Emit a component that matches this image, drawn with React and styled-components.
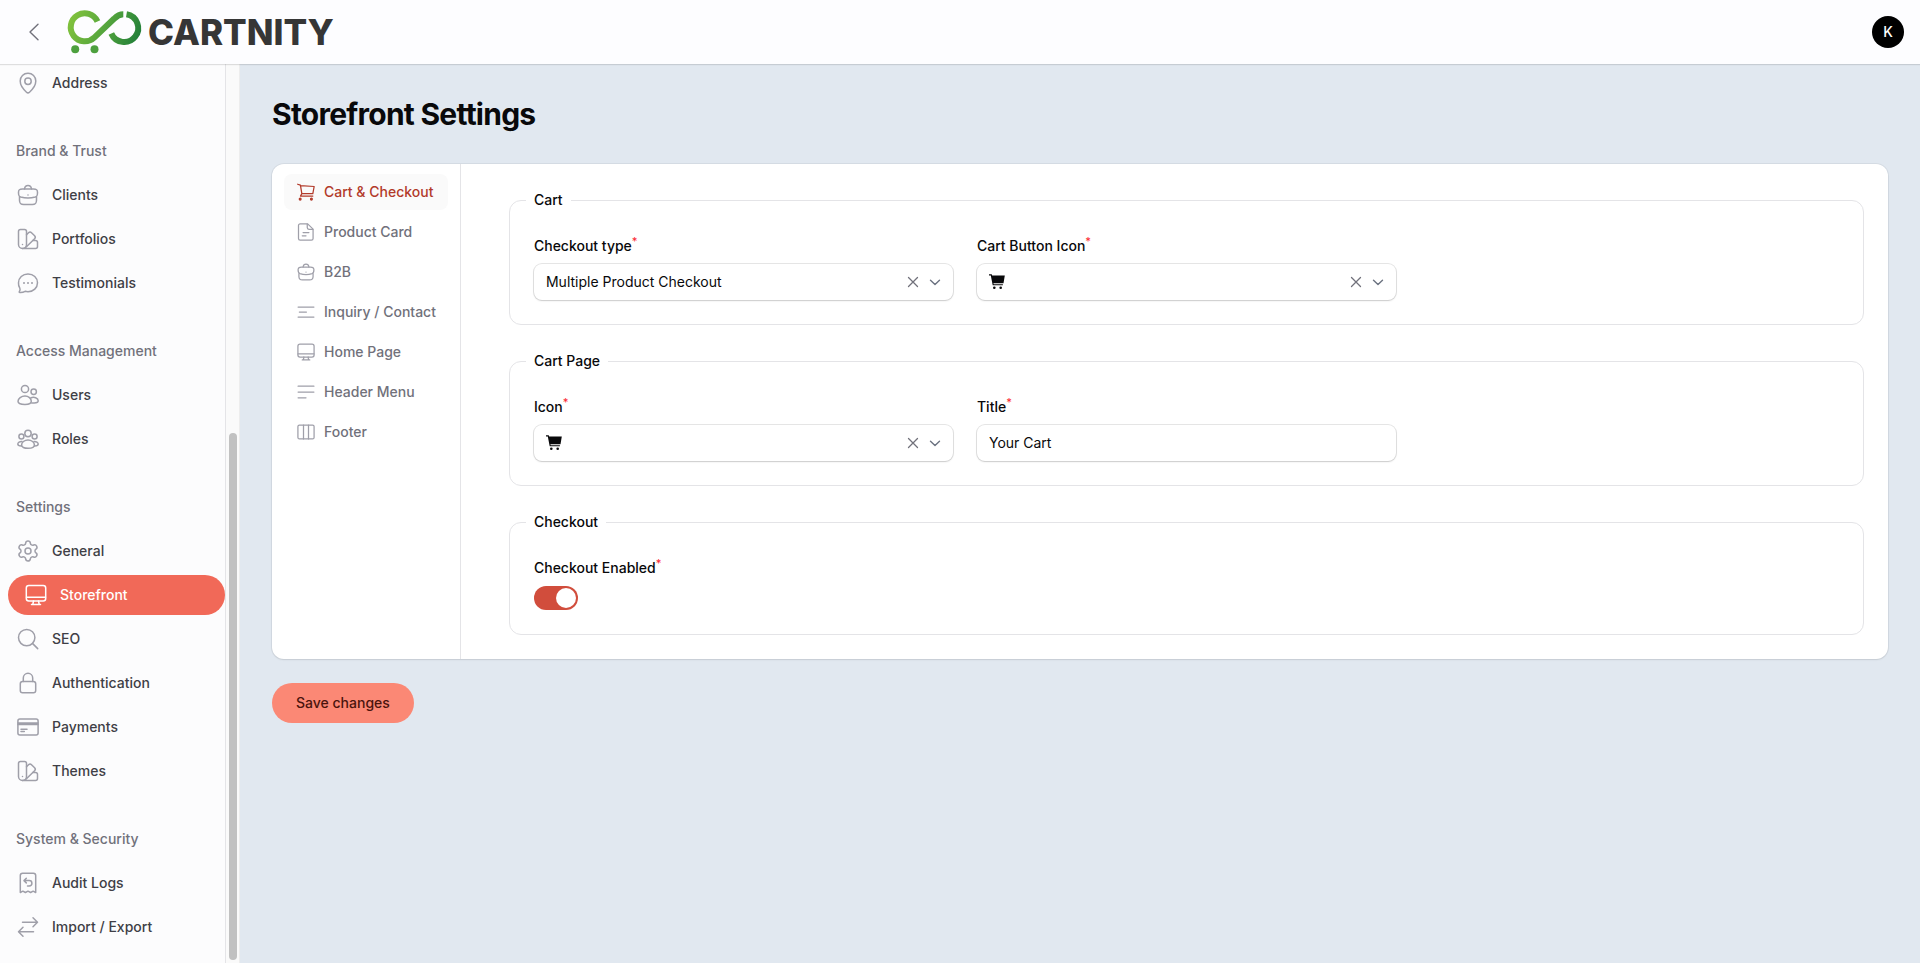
import React, { useState } from 'react';
import styled, { createGlobalStyle, css } from 'styled-components';
import { Settings } from 'lucide-react';

const GlobalStyle = createGlobalStyle`
    *, *::before, *::after {
        box-sizing: border-box;
    }
    body {
        margin: 0;
        background: #e1e8f0;
        color: #09090b;
        font-family: Inter, "Noto Sans", sans-serif;
        font-size: 14px;
        line-height: 20px;
        -webkit-font-smoothing: antialiased;
    }
    button, input, select {
        font: inherit;
        color: inherit;
    }
`;

const Page = styled.div`
    display: flex;
    flex-direction: column;
    height: 100vh;
`;

const Topbar = styled.header`
    display: flex;
    align-items: center;
    flex: none;
    height: 64px;
    padding: 0 16px 0 24px;
    background: #fdfdff;
    box-shadow: 0 1px 1px rgba(9, 9, 11, 0.12);
    z-index: 1;
`;

const IconButton = styled.button`
    display: flex;
    padding: 0;
    border: none;
    background: none;
    color: #71717b;
    cursor: pointer;
`;

const Logo = styled.a`
    display: flex;
    align-items: center;
    gap: 4px;
    margin-left: 22px;
    margin-right: auto;
    color: #363636;
    text-decoration: none;
    font-size: 35px;
    font-weight: 800;
    line-height: 40px;
`;

const Avatar = styled.button`
    width: 32px;
    height: 32px;
    padding: 0;
    border: none;
    border-radius: 50%;
    background: #000;
    color: #fff;
    font-weight: 500;
`;

const Body = styled.div`
    display: flex;
    flex: 1;
    min-height: 0;
`;

const Sidebar = styled.aside`
    display: flex;
    flex: none;
    width: 240px;
    background: #fcfcfd;
`;

const Nav = styled.nav`
    display: flex;
    flex-direction: column;
    justify-content: flex-end;
    gap: 28px;
    flex: 1;
    padding-bottom: 16px;
    border-right: 1px solid #e4e4e7;
    overflow: hidden;
`;

const ScrollTrack = styled.div`
    display: flex;
    flex-direction: column;
    justify-content: flex-end;
    width: 14px;
    padding: 3px 2px 3px 3px;
    background: #fafafa;
    border-right: 1px solid #ededed;
`;

const ScrollThumb = styled.div`
    height: 59%;
    border-radius: 4px;
    background: #c1c1c1;
`;

const NavGroup = styled.div`
    display: flex;
    flex-direction: column;
    flex: none;
    gap: 4px;
`;

const GroupLabel = styled.div`
    padding: 10px 16px;
    color: #71717b;
    font-weight: 500;
`;

const NavLink = styled.a`
    display: flex;
    align-items: center;
    gap: 12px;
    height: 40px;
    padding: 0 16px;
    color: #3f3f46;
    font-weight: 500;
    text-decoration: none;
    svg {
        color: #9f9fa9;
    }
    ${({ $active }) => $active && css`
        margin-left: 8px;
        border-radius: 20px;
        background: #f16958;
        color: #fff;
        svg {
            color: #fff;
        }
    `}
`;

const Main = styled.main`
    display: flex;
    flex-direction: column;
    align-items: flex-start;
    flex: 1;
    min-width: 0;
    padding: 32px;
    overflow: auto;
`;

const Title = styled.h1`
    margin: 0 0 32px;
    font-size: 30px;
    line-height: 36px;
    font-weight: 700;
    letter-spacing: -0.025em;
`;

const Card = styled.section`
    display: flex;
    width: 100%;
    border-radius: 12px;
    background: #fff;
    box-shadow: 0 0 0 1px rgba(9, 9, 11, 0.05), 0 1px 2px rgba(9, 9, 11, 0.08);
`;

const Tabs = styled.nav`
    display: flex;
    flex-direction: column;
    gap: 4px;
    padding: 10px 12px;
    border-right: 1px solid #e4e4e7;
`;

const Tab = styled.a`
    display: flex;
    align-items: center;
    gap: 8px;
    height: 36px;
    padding: 0 12px;
    border-radius: 8px;
    color: ${({ $active }) => ($active ? '#b23a2a' : '#71717b')};
    background: ${({ $active }) => ($active ? '#fafafa' : 'transparent')};
    font-weight: 500;
    text-decoration: none;
    svg {
        color: ${({ $active }) => ($active ? '#b23a2a' : '#9f9fa9')};
    }
`;

const Form = styled.form`
    display: flex;
    flex-direction: column;
    gap: 24px;
    flex: 1;
    min-width: 0;
    padding: 24px 24px 24px 48px;
`;

const Fieldset = styled.fieldset`
    display: grid;
    grid-template-columns: repeat(3, minmax(0, 1fr));
    gap: 24px;
    margin: 0;
    padding: 24px;
    border: 1px solid #e4e4e7;
    border-radius: 12px;
`;

const Legend = styled.legend`
    margin-left: -8px;
    padding: 0 8px;
    line-height: 24px;
    font-weight: 500;
`;

const FieldBlock = styled.div`
    display: flex;
    flex-direction: column;
    align-items: flex-start;
    gap: 8px;
`;

const Label = styled.label`
    font-weight: 500;
`;

const Required = styled.sup`
    color: #fb2c36;
    font-size: 11px;
    line-height: 0;
`;

const Control = styled.div`
    display: flex;
    align-items: center;
    gap: 8px;
    width: 100%;
    height: 36px;
    padding: 0 11px 0 12px;
    border-radius: 8px;
    background: #fff;
    box-shadow: 0 0 0 1px rgba(9, 9, 11, 0.1), 0 1px 2px rgba(9, 9, 11, 0.12);
    color: #09090b;
`;

const Select = styled.select`
    appearance: none;
    flex: 1;
    min-width: 0;
    padding: 0;
    border: none;
    outline: none;
    background: none;
    line-height: 20px;
`;

const TextInput = styled.input`
    flex: 1;
    min-width: 0;
    padding: 0;
    border: none;
    outline: none;
    background: none;
    line-height: 20px;
`;

const Toggle = styled.input`
    appearance: none;
    display: flex;
    width: 44px;
    height: 24px;
    margin: 0;
    padding: 2px;
    border-radius: 12px;
    background: #e4e4e7;
    cursor: pointer;
    &::before {
        content: '';
        width: 20px;
        height: 20px;
        border-radius: 50%;
        background: #fff;
    }
    &:checked {
        justify-content: flex-end;
        background: #d14d3c;
    }
`;

const SaveButton = styled.button`
    height: 40px;
    margin-top: 24px;
    padding: 0 24px;
    border: none;
    border-radius: 20px;
    background: #fb8875;
    color: #4a140d;
    font-weight: 500;
    cursor: pointer;
`;

const icons = {
    pin: (
        <>
            <path d="M12 2.3a7.7 7.7 0 0 1 7.8 7.8c0 5.2-3.5 8.6-6.3 11.1a2.2 2.2 0 0 1-3 0C7.7 18.7 4.2 15.3 4.2 10.1A7.7 7.7 0 0 1 12 2.3z" />
            <circle cx="12" cy="10.3" r="3.2" />
        </>
    ),
    briefcase: (
        <>
            <path d="M8.5 6c.3-2.3.9-3.5 3.5-3.5s3.2 1.200 3.500 3.500" />
            <path d="M6.500 6h11c3.200 0 4 .9 4 3.400 0 3.700-.7 4.100-2.200 4.600-4.700 1.400-9.900 1.400-14.600 0-1.500-.5-2.200-.9-2.200-4.600C2.500 6.900 3.300 6 6.500 6z" />
            <path d="M3.500 14v3.300c0 3.200.9 4.200 4.200 4.200h8.600c3.300 0 4.200-1 4.200-4.200V14M12 12h.01" />
        </>
    ),
    swatch: (
        <>
            <path d="M4.500 2.500h4c1.400 0 2 .6 2 2v13a4 4 0 0 1-8 0v-13c0-1.400.6-2 2-2zM6.500 17.500h.01" />
            <path d="M10.500 7.700l2-1.900c1.100-1 2-1 3 0l3.100 3c1 1.100 1 2 0 3L9.400 20.700" />
            <path d="M16.800 13.500h2.700c1.400 0 2 .6 2 2v4c0 1.400-.6 2-2 2h-13" />
        </>
    ),
    chat: (
        <>
            <path d="M12 3c5.400 0 9.500 3.900 9.500 8.800 0 5-4.100 8.900-9.500 8.900-1 0-2-.1-2.900-.4-1.500.9-3.400 1.300-5.300 1.200-.6 0-.8-.5-.5-.9.900-1.200 1-2.400.5-3.500A8.500 8.500 0 0 1 2.500 11.800C2.500 6.900 6.600 3 12 3z" />
            <path d="M8 12h.01M12 12h.01M16 12h.01" strokeWidth="2" />
        </>
    ),
    users: (
        <>
            <circle cx="9" cy="6" r="3.600" />
            <circle cx="17.700" cy="8.700" r="2.700" />
            <path d="M9 13c3.600 0 6.300 2.500 6.300 5.300 0 2.500-2.500 3.200-6.300 3.200s-7-.7-7-3.200C2 15.500 5.400 13 9 13z" />
            <path d="M14.500 15.200c3.500-2 7.700 0 7.700 2.600 0 1.600-1.500 2.200-4 2.200h-2.500" />
        </>
    ),
    roles: (
        <>
            <circle cx="12" cy="6.500" r="3.200" />
            <circle cx="5.400" cy="9.500" r="2.500" />
            <circle cx="18.600" cy="9.500" r="2.500" />
            <path d="M12 13c3.600 0 6.400 2.400 6.400 5 0 2.300-2.600 3.300-6.400 3.300S5.600 20.300 5.600 18c0-2.600 2.800-5 6.400-5z" />
            <path d="M6 14.500c-2.200-.2-4.200 1.100-4.200 2.600 0 1.200 1.100 1.900 3.600 2M18 14.500c2.200-.2 4.200 1.100 4.200 2.600 0 1.200-1.100 1.900-3.600 2" />
        </>
    ),
    monitor: (
        <>
            <rect x="2.300" y="2.500" width="19.400" height="15.500" rx="2.500" />
            <path d="M2.500 14.300h19M9.500 18l-.7 3.300M14.500 18l.7 3.300M7.500 21.500h9" />
        </>
    ),
    search: (
        <>
            <circle cx="10.700" cy="10.600" r="8.200" />
            <path d="M16.700 16.600l5 5" />
        </>
    ),
    lock: (
        <>
            <rect x="4.300" y="10.500" width="15.400" height="11.200" rx="2.300" />
            <path d="M7.300 10.500V7a4.700 4.700 0 0 1 9.400 0v3.500" />
        </>
    ),
    card: (
        <>
            <rect x="1.900" y="4" width="20.200" height="16" rx="2" />
            <path d="M2 8h20M2 9.500h20M5 14.300h6M5 16.500h3.300" />
        </>
    ),
    audit: (
        <>
            <path d="M4.300 21.500V4.500c0-1.500.8-2.300 2.300-2.300h10.800c1.500 0 2.300.8 2.300 2.300v17l-2.600-1.300-2.500 1.300-2.600-1.300-2.600 1.300-2.500-1.300z" />
            <path d="M10.300 7.300L8 9.600l2.300 2.300M8.300 9.600h4.900a2.700 2.700 0 0 1 0 5.400h-1.700" />
        </>
    ),
    transfer: (
        <path d="M6.500 7.300h14.700M17 2.800l4.500 4.500L17 11.800M17.500 16.700H2.800M7 12.200l-4.500 4.500L7 21.200" />
    ),
    cart: (
        <>
            <path d="M2 2.700l3.300 1.100L7 14M5.300 4.400l16.500 1-1.600 8.600H7l-1.600 2.900h14.800" />
            <circle cx="5" cy="20.500" r="1.100" fill="currentColor" />
            <circle cx="18.500" cy="20.500" r="1.100" fill="currentColor" />
        </>
    ),
    document: (
        <>
            <path d="M14 2.300H5c-1.300 0-2 .7-2 2v15.400c0 1.300.7 2 2 2h13.500c1.300 0 2-.7 2-2V8.500z" />
            <path d="M13.500 2.500v4.200c0 1.300.7 2 2 2h4.700M8.500 12.700h7M7.500 16.500h4.500" />
        </>
    ),
    linesShort: <path d="M2.500 6h19M4 12h8.500M2.500 18h19" />,
    linesLeft: <path d="M2.500 5h19M2.500 12h19M2.500 19h9.500" />,
    columns: (
        <>
            <rect x="2.300" y="3.700" width="19.400" height="16.600" rx="1.800" />
            <path d="M9 3.700v16.600M15 3.700v16.600" />
        </>
    )
};

const Icon = ({ name, size = 24 }) => {
    if (name === 'gear') {
        return <Settings size={size} strokeWidth={1.5} />;
    }
    return (
        <svg
            width={size}
            height={size}
            viewBox="0 0 24 24"
            fill="none"
            stroke="currentColor"
            strokeWidth="1.5"
            strokeLinecap="round"
            strokeLinejoin="round"
            aria-hidden="true"
        >
            {icons[name]}
        </svg>
    );
};

const LogoMark = () => (
    <svg width="78" height="48" viewBox="66 8 78 48" fill="none" aria-hidden="true">
        <defs>
            <linearGradient id="mark" gradientUnits="userSpaceOnUse" x1="68" y1="12" x2="142" y2="44">
                <stop offset="0" stopColor="#86c53d" />
                <stop offset="0.5" stopColor="#55a53d" />
                <stop offset="1" stopColor="#1b7a39" />
            </linearGradient>
        </defs>
        <g stroke="url(#mark)" strokeWidth="6">
            <path d="M97.500 21.500A14 14 0 1 0 94.500 37.300L114 18.800Q118.500 14.300 123.300 14.300" />
            <path d="M126.500 14.200A14 14 0 1 1 111.300 33.500" />
        </g>
        <circle cx="75.200" cy="49.300" r="4" fill="#4da03e" />
        <circle cx="94.500" cy="49.300" r="4" fill="#4da03e" />
    </svg>
);

const SolidCart = () => (
    <svg width="16" height="16" viewBox="0 0 16 16" fill="currentColor" aria-hidden="true">
        <path d="M0 .3h2.700l.5 1.200h12.600l-1.300 7.700H4.400l.3 1h9.200v1.100H3.700L1.800 1.500H0z" />
        <circle cx="5.300" cy="13.700" r="1.300" />
        <circle cx="11.700" cy="13.700" r="1.300" />
    </svg>
);

const navGroups = [
    { items: [['Address', 'pin']] },
    {
        label: 'Brand & Trust',
        items: [['Clients', 'briefcase'], ['Portfolios', 'swatch'], ['Testimonials', 'chat']]
    },
    {
        label: 'Access Management',
        items: [['Users', 'users'], ['Roles', 'roles']]
    },
    {
        label: 'Settings',
        items: [
            ['General', 'gear'],
            ['Storefront', 'monitor'],
            ['SEO', 'search'],
            ['Authentication', 'lock'],
            ['Payments', 'card'],
            ['Themes', 'swatch']
        ]
    },
    {
        label: 'System & Security',
        items: [['Audit Logs', 'audit'], ['Import / Export', 'transfer']]
    }
];

const tabs = [
    ['Cart & Checkout', 'cart'],
    ['Product Card', 'document'],
    ['B2B', 'briefcase'],
    ['Inquiry / Contact', 'linesShort'],
    ['Home Page', 'monitor'],
    ['Header Menu', 'linesLeft'],
    ['Footer', 'columns']
];

const Field = ({ id, label, children }) => (
    <FieldBlock>
        <Label htmlFor={id}>{label}<Required>*</Required></Label>
        {children}
    </FieldBlock>
);

const SelectControl = ({ id, value, icon }) => (
    <Control>
        {icon}
        <Select id={id} defaultValue={value}>
            <option value={value}>{value}</option>
        </Select>
        <IconButton type="button" aria-label="Clear">
            <svg width="14" height="14" viewBox="0 0 14 14" stroke="currentColor" strokeWidth="1.3" strokeLinecap="round">
                <path d="M2.5 2.500l9 9M11.500 2.500l-9 9" />
            </svg>
        </IconButton>
        <svg width="14" height="14" viewBox="0 0 14 14" fill="none" stroke="#6b7280" strokeWidth="1.4" strokeLinecap="round" strokeLinejoin="round" aria-hidden="true">
            <path d="M2.500 5.300L7 9.500l4.500-4.200" />
        </svg>
    </Control>
);

const App = () => {
    const [enabled, setEnabled] = useState(true);
    const [title, setTitle] = useState('Your Cart');

    return (
        <Page>
            <GlobalStyle />
            <Topbar>
                <IconButton type="button" aria-label="Collapse sidebar">
                    <svg width="20" height="20" viewBox="0 0 20 20" fill="none" stroke="currentColor" strokeWidth="1.4" strokeLinecap="round" strokeLinejoin="round">
                        <path d="M14 2.300L6 10l8 7.700" />
                    </svg>
                </IconButton>
                <Logo href="#">
                    <LogoMark />
                    CARTNITY
                </Logo>
                <Avatar type="button">K</Avatar>
            </Topbar>
            <Body>
                <Sidebar>
                    <Nav>
                        {navGroups.map(({ label, items }) => (
                            <NavGroup key={label || 'top'}>
                                {label && <GroupLabel>{label}</GroupLabel>}
                                {items.map(([text, icon]) => (
                                    <NavLink key={text} href="#" $active={text === 'Storefront'}>
                                        <Icon name={icon} />
                                        {text}
                                    </NavLink>
                                ))}
                            </NavGroup>
                        ))}
                    </Nav>
                    <ScrollTrack>
                        <ScrollThumb />
                    </ScrollTrack>
                </Sidebar>
                <Main>
                    <Title>Storefront Settings</Title>
                    <Card>
                        <Tabs>
                            {tabs.map(([text, icon]) => (
                                <Tab key={text} href="#" $active={icon === 'cart'}>
                                    <Icon name={icon} size={20} />
                                    {text}
                                </Tab>
                            ))}
                        </Tabs>
                        <Form id="settings" onSubmit={e => e.preventDefault()}>
                            <Fieldset>
                                <Legend>Cart</Legend>
                                <Field id="checkout-type" label="Checkout type">
                                    <SelectControl id="checkout-type" value="Multiple Product Checkout" />
                                </Field>
                                <Field id="button-icon" label="Cart Button Icon">
                                    <SelectControl id="button-icon" value="" icon={<SolidCart />} />
                                </Field>
                            </Fieldset>
                            <Fieldset>
                                <Legend>Cart Page</Legend>
                                <Field id="page-icon" label="Icon">
                                    <SelectControl id="page-icon" value="" icon={<SolidCart />} />
                                </Field>
                                <Field id="page-title" label="Title">
                                    <Control>
                                        <TextInput id="page-title" value={title} onChange={e => setTitle(e.target.value)} />
                                    </Control>
                                </Field>
                            </Fieldset>
                            <Fieldset>
                                <Legend>Checkout</Legend>
                                <Field id="checkout-enabled" label="Checkout Enabled">
                                    <Toggle
                                        id="checkout-enabled"
                                        type="checkbox"
                                        role="switch"
                                        checked={enabled}
                                        onChange={e => setEnabled(e.target.checked)}
                                    />
                                </Field>
                            </Fieldset>
                        </Form>
                    </Card>
                    <SaveButton type="submit" form="settings">Save changes</SaveButton>
                </Main>
            </Body>
        </Page>
    );
};

export default App;
